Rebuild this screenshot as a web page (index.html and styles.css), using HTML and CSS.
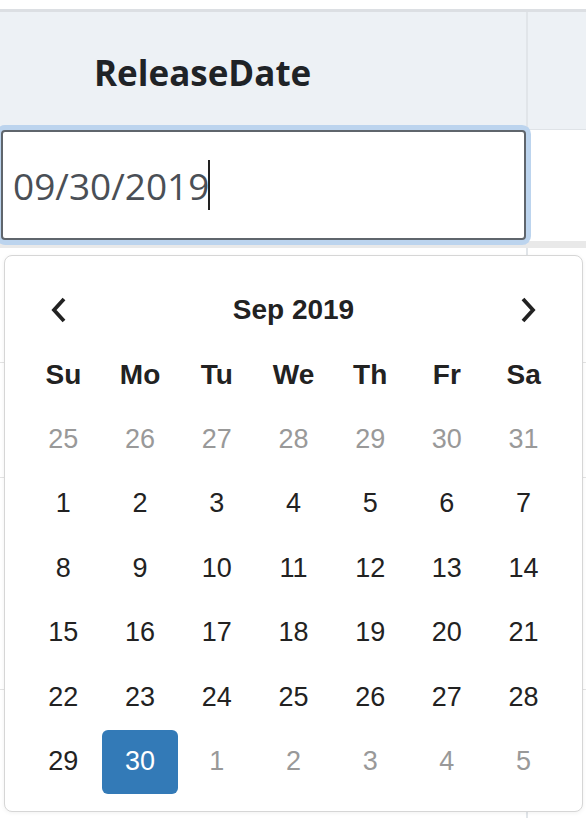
FILE: index.html
```html
<!DOCTYPE html>
<html lang="en">
<head>
    <meta charset="UTF-8">
    <title>ReleaseDate picker</title>
    <link rel="stylesheet" href="styles.css">
</head>
<body>
    <div class="grid">
        <div class="row head-row">
            <div class="cell main-col head-cell">ReleaseDate</div>
            <div class="cell side-col head-cell"></div>
        </div>
        <div class="row edit-row">
            <div class="cell main-col">
                <div class="date-input">09/30/2019<span class="caret"></span></div>
            </div>
            <div class="cell side-col"></div>
        </div>
        <div class="row body-row"><div class="cell main-col"></div><div class="cell side-col"></div></div>
        <div class="row body-row"><div class="cell main-col"></div><div class="cell side-col"></div></div>
        <div class="row body-row tall"><div class="cell main-col"></div><div class="cell side-col"></div></div>
        <div class="row body-row last"><div class="cell main-col"></div><div class="cell side-col"></div></div>

        <div class="picker">
            <table class="cal">
                <thead>
                    <tr class="nav">
                        <th class="arrow prev">
                            <svg width="20" height="28" viewBox="0 0 20 28"><path d="M15 3 L5 14 L15 25" fill="none" stroke="#222" stroke-width="3.8"/></svg>
                        </th>
                        <th colspan="5" class="title">Sep 2019</th>
                        <th class="arrow next">
                            <svg width="20" height="28" viewBox="0 0 20 28"><path d="M5 3 L15 14 L5 25" fill="none" stroke="#222" stroke-width="3.8"/></svg>
                        </th>
                    </tr>
                    <tr class="dow">
                        <th>Su</th><th>Mo</th><th>Tu</th><th>We</th><th>Th</th><th>Fr</th><th>Sa</th>
                    </tr>
                </thead>
                <tbody>
                    <tr><td class="old">25</td><td class="old">26</td><td class="old">27</td><td class="old">28</td><td class="old">29</td><td class="old">30</td><td class="old">31</td></tr>
                    <tr><td>1</td><td>2</td><td>3</td><td>4</td><td>5</td><td>6</td><td>7</td></tr>
                    <tr><td>8</td><td>9</td><td>10</td><td>11</td><td>12</td><td>13</td><td>14</td></tr>
                    <tr><td>15</td><td>16</td><td>17</td><td>18</td><td>19</td><td>20</td><td>21</td></tr>
                    <tr><td>22</td><td>23</td><td>24</td><td>25</td><td>26</td><td>27</td><td>28</td></tr>
                    <tr><td>29</td><td class="active">30</td><td class="old">1</td><td class="old">2</td><td class="old">3</td><td class="old">4</td><td class="old">5</td></tr>
                </tbody>
            </table>
        </div>
    </div>
</body>
</html>
```

FILE: styles.css
```css
* {
    margin: 0;
    padding: 0;
    box-sizing: border-box;
}
body {
    background: #fff;
    font-family: "Liberation Sans", Arial, sans-serif;
    padding-top: 9px;
}
.grid {
    position: relative;
    border-top: 3px solid #dcdfe3;
}
.row {
    display: flex;
}
.cell {
    border-right: 2px solid #e1e5e9;
}
.main-col {
    flex: 0 0 528px;
}
.side-col {
    flex: 1;
    min-width: 0;
    border-right: none;
}
.head-row {
    height: 118px;
    border-bottom: 1px solid #dfe3e7;
}
.head-cell {
    background: #edf1f5;
    display: flex;
    align-items: center;
    padding-top: 4px;
    font-family: "Open Sans", sans-serif;
    font-weight: 700;
    font-size: 35px;
    color: #1f2327;
}
.head-cell.main-col {
    padding-left: 94px;
}
.edit-row {
    height: 118px;
    border-bottom: 7px solid #e9e9e9;
}
.date-input {
    height: 110px;
    margin-left: 1px;
    border: 2px solid #5f656c;
    border-radius: 4px;
    box-shadow: 0 0 0 5px #bcd4ee;
    display: flex;
    align-items: center;
    padding-left: 10px;
    font-family: "Open Sans", sans-serif;
    font-size: 37px;
    color: #4a4f56;
    background: #fff;
}
.caret {
    display: inline-block;
    width: 2px;
    height: 50px;
    background: #222;
    margin-left: -1px;
}
.body-row {
    height: 115px;
    border-bottom: 1px solid #e3e3e3;
}
.body-row.tall {
    height: 212px;
}
.body-row.last {
    height: 128px;
    border-bottom: none;
}
.picker {
    position: absolute;
    top: 243px;
    left: 4px;
    width: 579px;
    height: 557px;
    background: #fff;
    border: 1px solid #d6d6d6;
    border-radius: 8px;
    box-shadow: 0 1px 4px rgba(0, 0, 0, 0.06);
    padding: 22px 20px 0;
}
.cal {
    width: 100%;
    border-collapse: collapse;
    table-layout: fixed;
}
.cal th,
.cal td {
    height: 64.5px;
    text-align: center;
    vertical-align: middle;
    font-size: 27px;
    color: #222;
}
.cal th {
    font-weight: 700;
    font-size: 28px;
}
.cal .arrow svg {
    display: block;
    margin: 0 auto;
}
.cal .prev svg {
    margin-left: 24px;
}
.cal .next svg {
    margin-left: 33px;
}
.cal td.old {
    color: #999;
}
.cal td.active {
    background: #337ab7;
    color: #fff;
    border-radius: 6px;
}
```
